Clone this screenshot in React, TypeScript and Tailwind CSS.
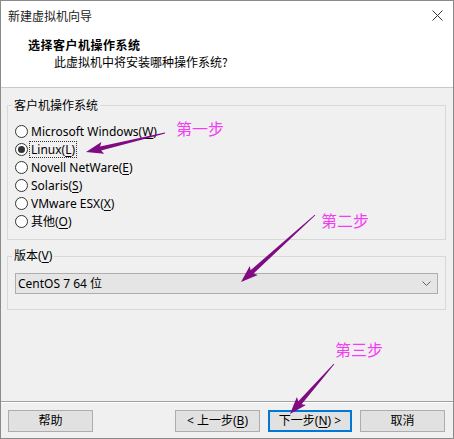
import React from "react";

type Pt = [number, number];

function arrowPoints(tail: Pt, tip: Pt, headLen = 15, headHalf = 6, shaftHalf = 2.2) {
  const dx = tip[0] - tail[0];
  const dy = tip[1] - tail[1];
  const len = Math.hypot(dx, dy);
  const ux = dx / len;
  const uy = dy / len;
  const nx = -uy;
  const ny = ux;
  const bx = tip[0] - ux * headLen;
  const by = tip[1] - uy * headLen;
  const gx = tip[0] - ux * headLen * 1.15;
  const gy = tip[1] - uy * headLen * 1.15;
  const pts: Pt[] = [
    [tail[0] + nx * 0.4, tail[1] + ny * 0.4],
    [bx + nx * shaftHalf, by + ny * shaftHalf],
    [gx + nx * headHalf, gy + ny * headHalf],
    tip,
    [gx - nx * headHalf, gy - ny * headHalf],
    [bx - nx * shaftHalf, by - ny * shaftHalf],
    [tail[0] - nx * 0.4, tail[1] - ny * 0.4],
  ];
  return pts.map((p) => `${p[0].toFixed(1)},${p[1].toFixed(1)}`).join(" ");
}

const osList = [
  { name: "Microsoft Windows(", key: "W", checked: false },
  { name: "Linux(", key: "L", checked: true },
  { name: "Novell NetWare(", key: "E", checked: false },
  { name: "Solaris(", key: "S", checked: false },
  { name: "VMware ESX(", key: "X", checked: false },
  { name: "其他(", key: "O", checked: false },
];

function Radio({ checked }: { checked: boolean }) {
  return (
    <span className="w-[13px] h-[13px] rounded-full border border-[#333] bg-white flex items-center justify-center shrink-0">
      {checked && <span className="w-[7px] h-[7px] rounded-full bg-[#333]" />}
    </span>
  );
}

function Btn({ children, primary }: { children: React.ReactNode; primary?: boolean }) {
  return (
    <button
      className={
        primary
          ? "w-[84px] h-[22px] bg-[#e1e1e1] border-2 border-[#0078d7] text-[12px] leading-none text-black"
          : "w-[85px] h-[22px] bg-[#e1e1e1] border border-[#adadad] text-[12px] leading-none text-black"
      }
    >
      {children}
    </button>
  );
}

export default function App() {
  return (
    <div className="relative w-[454px] h-[439px] border border-[#8a8a8a] bg-[#f0f0f0] flex flex-col font-['Noto_Sans','Noto_Sans_CJK_SC',sans-serif] text-[12px] text-black overflow-hidden">
      {/* title bar */}
      <div className="h-[29px] bg-white flex items-center justify-between pl-[7px] pr-[10px]">
        <span className="font-['Noto_Sans_CJK_SC',sans-serif] text-[12px] text-[#222]">新建虚拟机向导</span>
        <svg width="11" height="11" viewBox="0 0 11 11">
          <path d="M0.5 0.5 L10.5 10.5 M10.5 0.5 L0.5 10.5" stroke="#333" strokeWidth="1" />
        </svg>
      </div>

      {/* header */}
      <div className="h-[58px] bg-white border-b border-[#c8c8c8] pt-[7px] font-['Noto_Sans_CJK_SC',sans-serif]">
        <div className="pl-[27px] leading-[16px] font-bold tracking-[0.5px]">选择客户机操作系统</div>
        <div className="pl-[53px] leading-[16px] mt-[1px]">此虚拟机中将安装哪种操作系统?</div>
      </div>

      {/* body */}
      <div className="flex-1 flex flex-col pl-[6px] pr-[7px]">
        <fieldset className="mt-[9px] border border-[#d8d8d8] px-[7px] pb-[9px]">
          <legend className="-ml-[3px] px-[2px] leading-[16px] font-['Noto_Sans_CJK_SC',sans-serif]">客户机操作系统</legend>
          <div className="pt-[9px] flex flex-col">
            {osList.map((os) => (
              <div key={os.key} className="h-[18px] flex items-center gap-[3px]">
                <Radio checked={os.checked} />
                <span
                  className={
                    os.checked
                      ? "leading-[15px] border border-dotted border-[#333] px-[1px] -ml-[2px]"
                      : "leading-[15px]"
                  }
                >
                  {os.name}
                  <span className="underline underline-offset-2">{os.key}</span>)
                </span>
              </div>
            ))}
          </div>
        </fieldset>

        <fieldset className="mt-[8px] border border-[#d8d8d8] px-[7px] pb-[15px]">
          <legend className="-ml-[3px] px-[2px] leading-[16px]">
            版本(<span className="underline underline-offset-2">V</span>)
          </legend>
          <div className="pt-[9px]">
            <div className="h-[21px] bg-[#e5e5e5] border border-[#adadad] flex items-center justify-between pl-[2px] pr-[6px]">
              <span>CentOS 7 64 位</span>
              <svg width="9" height="5" viewBox="0 0 9 5">
                <path d="M0.5 0.5 L4.5 4.5 L8.5 0.5" stroke="#606060" strokeWidth="1" fill="none" />
              </svg>
            </div>
          </div>
        </fieldset>
        <div className="flex-1" />
      </div>

      {/* footer */}
      <div className="border-t border-[#a0a0a0] shadow-[inset_0_1px_0_#ffffff] pt-[8px] pb-[6px] pl-[7px] pr-[8px] flex items-center">
        <Btn>帮助</Btn>
        <div className="flex-1" />
        <div className="flex gap-[8px]">
          <Btn>
            &lt; 上一步(<span className="underline underline-offset-2">B</span>)
          </Btn>
          <Btn primary>
            下一步(<span className="underline underline-offset-2">N</span>) &gt;
          </Btn>
          <Btn>取消</Btn>
        </div>
      </div>

      {/* annotations */}
      <svg className="absolute left-0 top-0 pointer-events-none" width="454" height="439">
        <polygon points={arrowPoints([164, 132], [85, 151])} fill="#7f0a82" />
        <polygon points={arrowPoints([314, 214], [240, 281])} fill="#7f0a82" />
        <polygon points={arrowPoints([333, 363], [289, 413])} fill="#7f0a82" />
      </svg>
      <span className="absolute left-[175px] top-[117px] text-[16px] leading-[20px] text-[#f53cf5] font-['Noto_Sans_CJK_SC',sans-serif]">第一步</span>
      <span className="absolute left-[320px] top-[209px] text-[16px] leading-[20px] text-[#f53cf5] font-['Noto_Sans_CJK_SC',sans-serif]">第二步</span>
      <span className="absolute left-[334px] top-[338px] text-[16px] leading-[20px] text-[#f53cf5] font-['Noto_Sans_CJK_SC',sans-serif]">第三步</span>
    </div>
  );
}
